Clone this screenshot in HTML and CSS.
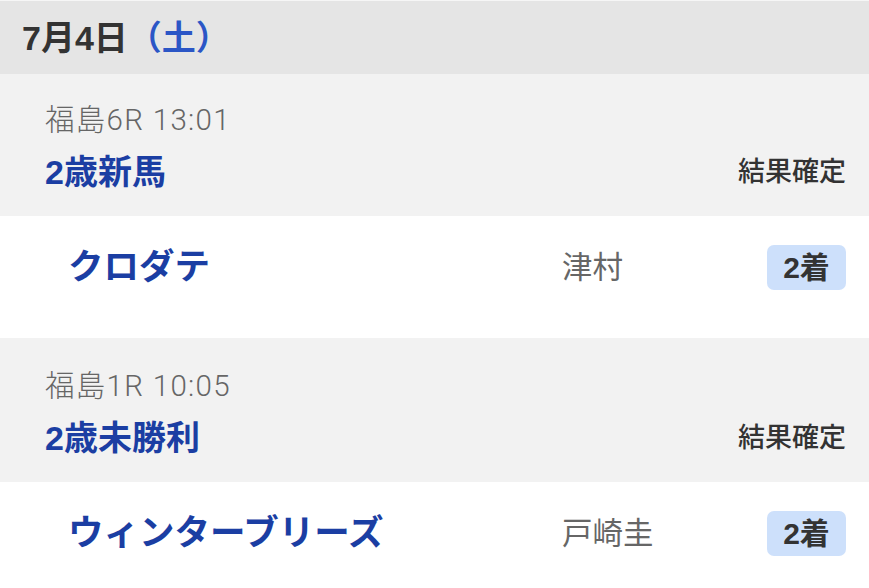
FILE: index.html
```html
<!DOCTYPE html>
<html lang="ja">
<head>
<meta charset="utf-8">
<link rel="stylesheet" href="styles.css">
</head>
<body>
<div class="page">
  <div class="day-header">7月4日<span class="wday">（土）</span></div>

  <section class="race">
    <div class="race-head">
      <div class="meta">福島6R 13:01</div>
      <div class="title-row">
        <div class="race-name">2歳新馬</div>
        <div class="status">結果確定</div>
      </div>
    </div>
    <div class="result">
      <div class="horse">クロダテ</div>
      <div class="jockey">津村</div>
      <div class="rank">2着</div>
    </div>
  </section>

  <section class="race race-second">
    <div class="race-head">
      <div class="meta">福島1R 10:05</div>
      <div class="title-row">
        <div class="race-name">2歳未勝利</div>
        <div class="status">結果確定</div>
      </div>
    </div>
    <div class="result">
      <div class="horse">ウィンターブリーズ</div>
      <div class="jockey">戸崎圭</div>
      <div class="rank">2着</div>
    </div>
  </section>
</div>
</body>
</html>
```

FILE: styles.css
```css
html, body {
  margin: 0;
  padding: 0;
  background: #ffffff;
}
body {
  font-family: "Liberation Sans", "Noto Sans CJK JP", sans-serif;
  color: #333333;
}
.page {
  width: 869px;
  border-top: 1px solid #f6f6f6;
}
.day-header {
  background: #e5e5e5;
  height: 73px;
  box-sizing: border-box;
  padding: 18px 0 0 22px;
  font-size: 34px;
  line-height: 38px;
  font-weight: 700;
  color: #333333;
}
.wday {
  color: #2b56c6;
}
.race-head {
  background: #f2f2f2;
  padding: 28px 23px 24px 45px;
}
.race-second .race-head {
  padding-top: 30px;
}
.meta {
  font-family: "Roboto", "Noto Sans CJK JP", sans-serif;
  font-size: 29.5px;
  line-height: 36px;
  letter-spacing: 1.3px;
  color: #666666;
  font-weight: 300;
}
.title-row {
  display: flex;
  justify-content: space-between;
  align-items: center;
  margin-top: 14px;
}
.race-name {
  font-size: 34px;
  line-height: 40px;
  font-weight: 700;
  color: #1b3ea3;
}
.status {
  font-size: 27px;
  line-height: 40px;
  font-weight: 500;
  color: #333333;
}
.result {
  display: flex;
  align-items: center;
  padding: 29px 23px 48px 68px;
  height: 45px;
}
.horse {
  flex: 1;
  font-size: 35.5px;
  font-weight: 700;
  color: #1b3ea3;
  line-height: 45px;
}
.jockey {
  width: 205px;
  font-size: 30.5px;
  color: #666666;
  line-height: 45px;
}
.rank {
  width: 79px;
  height: 45px;
  box-sizing: border-box;
  background: #cde0fb;
  border-radius: 7px;
  text-align: center;
  font-size: 30px;
  line-height: 45px;
  font-weight: 700;
  color: #333333;
}
```
